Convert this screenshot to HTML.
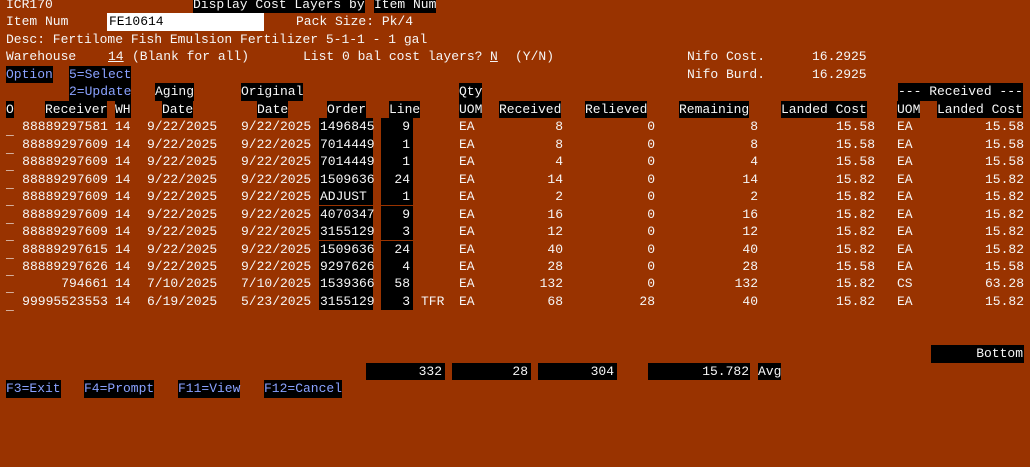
<!DOCTYPE html>
<html><head><meta charset="utf-8">
<style>
html,body{margin:0;padding:0;}
body{width:1030px;height:467px;background:#993300;position:relative;overflow:hidden;
font-family:"Liberation Mono","DejaVu Sans Mono",monospace;font-size:13px;color:#f6f6f6;}
.r{position:absolute;left:0;width:1030px;height:17.48px;line-height:17.48px;}
.r span{position:absolute;top:0;white-space:pre;height:17.48px;}
.b{background:#000;}
.bl{color:#8aa2ff;}
.u{text-decoration:underline;}
.us{left:6px;top:4px !important;}
.rc{right:922px;}
.wh{left:115px;}
.ad{left:147px;}
.od{left:241px;}
.or{left:319px;width:53px;padding-left:1px;background:#000;}
.ln{left:381px;width:29px;padding-right:3px;text-align:right;background:#000;}
.tf{left:421px;}
.uo{left:459px;}
.rv{right:467px;}
.rl{right:375px;}
.rm{right:272px;}
.lc{right:155px;}
.u2{left:897px;}
.l2{right:6px;}
</style></head><body>

<div class="r" style="top:-4.2px">
<span style="left:6px">ICR170</span>
<span class="b" style="left:193px">Display Cost Layers by</span>
<span class="b" style="left:374px">Item Num</span>
</div>
<div class="r" style="top:13.3px">
<span style="left:6px">Item Num</span>
<span style="left:107px;width:155px;background:#fff;color:#000;padding-left:2px">FE10614</span>
<span style="left:296px">Pack Size: Pk/4</span>
</div>
<div class="r" style="top:30.7px">
<span style="left:6px">Desc: Fertilome Fish Emulsion Fertilizer 5-1-1 - 1 gal</span>
</div>
<div class="r" style="top:48.2px">
<span style="left:6px">Warehouse</span>
<span class="u" style="left:108px">14</span>
<span style="left:132px">(Blank for all)</span>
<span style="left:303px">List 0 bal cost layers?</span>
<span class="u" style="left:490px">N</span>
<span style="left:515px">(Y/N)</span>
<span style="left:687px">Nifo Cost.</span>
<span style="left:812px">16.2925</span>
</div>
<div class="r" style="top:65.7px">
<span class="b bl" style="left:6px">Option</span>
<span class="b bl" style="left:69px">5=Select</span>
<span style="left:687px">Nifo Burd.</span>
<span style="left:812px">16.2925</span>
</div>
<div class="r" style="top:83.2px">
<span class="b bl" style="left:69px">2=Update</span>
<span class="b" style="left:155px">Aging</span>
<span class="b" style="left:241px">Original</span>
<span class="b" style="left:459px">Qty</span>
<span class="b" style="left:898px">--- Received ---</span>
</div>
<div class="r" style="top:100.6px">
<span class="b" style="left:6px">O</span>
<span class="b" style="left:45px">Receiver</span>
<span class="b" style="left:115px">WH</span>
<span class="b" style="left:162px">Date</span>
<span class="b" style="left:257px">Date</span>
<span class="b" style="left:327px">Order</span>
<span class="b" style="left:389px">Line</span>
<span class="b" style="left:459px">UOM</span>
<span class="b" style="left:499px">Received</span>
<span class="b" style="left:585px">Relieved</span>
<span class="b" style="left:679px">Remaining</span>
<span class="b" style="left:781px">Landed Cost</span>
<span class="b" style="left:897px">UOM</span>
<span class="b" style="left:937px">Landed Cost</span>
</div>

<div class="r" style="top:118.1px"><span class="us">_</span><span class="rc">88889297581</span><span class="wh">14</span><span class="ad">9/22/2025</span><span class="od">9/22/2025</span><span class="or">1496845</span><span class="ln">9</span><span class="uo">EA</span><span class="rv">8</span><span class="rl">0</span><span class="rm">8</span><span class="lc">15.58</span><span class="u2">EA</span><span class="l2">15.58</span></div>
<div class="r" style="top:135.6px"><span class="us">_</span><span class="rc">88889297609</span><span class="wh">14</span><span class="ad">9/22/2025</span><span class="od">9/22/2025</span><span class="or">7014449</span><span class="ln">1</span><span class="uo">EA</span><span class="rv">8</span><span class="rl">0</span><span class="rm">8</span><span class="lc">15.58</span><span class="u2">EA</span><span class="l2">15.58</span></div>
<div class="r" style="top:153.1px"><span class="us">_</span><span class="rc">88889297609</span><span class="wh">14</span><span class="ad">9/22/2025</span><span class="od">9/22/2025</span><span class="or">7014449</span><span class="ln">1</span><span class="uo">EA</span><span class="rv">4</span><span class="rl">0</span><span class="rm">4</span><span class="lc">15.58</span><span class="u2">EA</span><span class="l2">15.58</span></div>
<div class="r" style="top:170.6px"><span class="us">_</span><span class="rc">88889297609</span><span class="wh">14</span><span class="ad">9/22/2025</span><span class="od">9/22/2025</span><span class="or">1509636</span><span class="ln">24</span><span class="uo">EA</span><span class="rv">14</span><span class="rl">0</span><span class="rm">14</span><span class="lc">15.82</span><span class="u2">EA</span><span class="l2">15.82</span></div>
<div class="r" style="top:188.0px"><span class="us">_</span><span class="rc">88889297609</span><span class="wh">14</span><span class="ad">9/22/2025</span><span class="od">9/22/2025</span><span class="or">ADJUST</span><span class="ln">1</span><span class="uo">EA</span><span class="rv">2</span><span class="rl">0</span><span class="rm">2</span><span class="lc">15.82</span><span class="u2">EA</span><span class="l2">15.82</span></div>
<div class="r" style="top:205.5px"><span class="us">_</span><span class="rc">88889297609</span><span class="wh">14</span><span class="ad">9/22/2025</span><span class="od">9/22/2025</span><span class="or">4070347</span><span class="ln">9</span><span class="uo">EA</span><span class="rv">16</span><span class="rl">0</span><span class="rm">16</span><span class="lc">15.82</span><span class="u2">EA</span><span class="l2">15.82</span></div>
<div class="r" style="top:223.0px"><span class="us">_</span><span class="rc">88889297609</span><span class="wh">14</span><span class="ad">9/22/2025</span><span class="od">9/22/2025</span><span class="or">3155129</span><span class="ln">3</span><span class="uo">EA</span><span class="rv">12</span><span class="rl">0</span><span class="rm">12</span><span class="lc">15.82</span><span class="u2">EA</span><span class="l2">15.82</span></div>
<div class="r" style="top:240.5px"><span class="us">_</span><span class="rc">88889297615</span><span class="wh">14</span><span class="ad">9/22/2025</span><span class="od">9/22/2025</span><span class="or">1509636</span><span class="ln">24</span><span class="uo">EA</span><span class="rv">40</span><span class="rl">0</span><span class="rm">40</span><span class="lc">15.82</span><span class="u2">EA</span><span class="l2">15.82</span></div>
<div class="r" style="top:258.0px"><span class="us">_</span><span class="rc">88889297626</span><span class="wh">14</span><span class="ad">9/22/2025</span><span class="od">9/22/2025</span><span class="or">9297626</span><span class="ln">4</span><span class="uo">EA</span><span class="rv">28</span><span class="rl">0</span><span class="rm">28</span><span class="lc">15.58</span><span class="u2">EA</span><span class="l2">15.58</span></div>
<div class="r" style="top:275.4px"><span class="us">_</span><span class="rc">794661</span><span class="wh">14</span><span class="ad">7/10/2025</span><span class="od">7/10/2025</span><span class="or">1539366</span><span class="ln">58</span><span class="uo">EA</span><span class="rv">132</span><span class="rl">0</span><span class="rm">132</span><span class="lc">15.82</span><span class="u2">CS</span><span class="l2">63.28</span></div>
<div class="r" style="top:292.9px"><span class="us">_</span><span class="rc">99995523553</span><span class="wh">14</span><span class="ad">6/19/2025</span><span class="od">5/23/2025</span><span class="or">3155129</span><span class="ln">3</span><span class="tf">TFR</span><span class="uo">EA</span><span class="rv">68</span><span class="rl">28</span><span class="rm">40</span><span class="lc">15.82</span><span class="u2">EA</span><span class="l2">15.82</span></div>

<div class="r" style="top:345.4px">
<span class="b" style="left:931px;width:92px;text-align:right;padding-right:1px">Bottom</span>
</div>
<div class="r" style="top:362.8px">
<span class="b" style="left:366px;width:76px;text-align:right;padding-right:3px">332</span>
<span class="b" style="left:452px;width:76px;text-align:right;padding-right:3px">28</span>
<span class="b" style="left:538px;width:76px;text-align:right;padding-right:3px">304</span>
<span class="b" style="left:648px;width:101px;text-align:right;padding-right:1px">15.782</span>
<span class="b" style="left:758px">Avg</span>
</div>
<div class="r" style="top:380.3px">
<span class="b bl" style="left:6px">F3=Exit</span>
<span class="b bl" style="left:84px">F4=Prompt</span>
<span class="b bl" style="left:178px">F11=View</span>
<span class="b bl" style="left:264px">F12=Cancel</span>
</div>
</body></html>
